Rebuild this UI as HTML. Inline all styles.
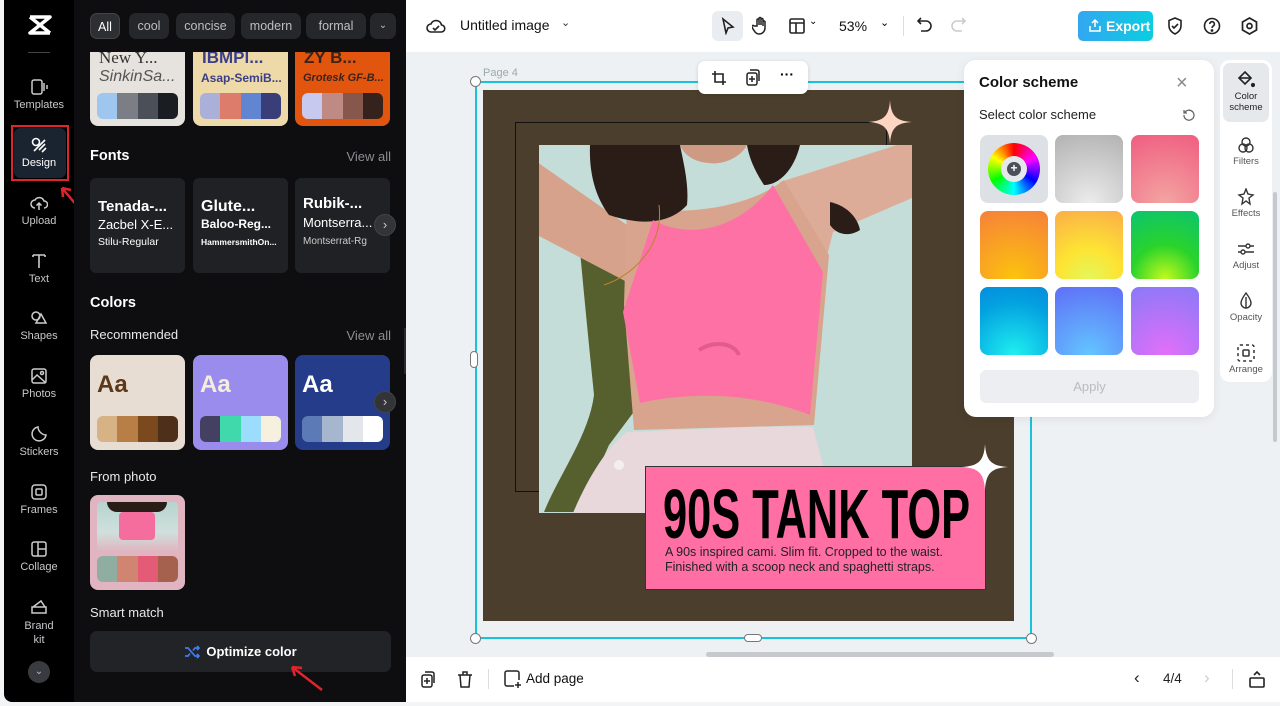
<!DOCTYPE html>
<html><head><meta charset="utf-8"><style>
*{box-sizing:border-box;margin:0;padding:0}
body{width:1280px;height:706px;overflow:hidden;background:#f3f4f6;font-family:"Liberation Sans",sans-serif;position:relative}
.abs{position:absolute}
#side{left:4px;top:0;width:70px;height:702px;background:#000;border-radius:0 0 0 8px}
.nav{position:absolute;left:0;width:70px;text-align:center;color:#c8c8cc;font-size:11px}
.nav svg{display:block;margin:0 auto 3px}
#panel{left:74px;top:0;width:332px;height:702px;background:#0e0e10;color:#fff}
.chip{position:absolute;top:13px;height:26px;border-radius:7px;background:#26272b;color:#bdbdc2;font-size:12.5px;line-height:26px;text-align:center}
.card{position:absolute;border-radius:8px;overflow:hidden}
.pal{position:absolute;left:7px;right:7px;height:26px;border-radius:6px;overflow:hidden;display:flex}
.pal i{flex:1}
.h{position:absolute;font-size:14.5px;font-weight:bold;color:#fff}
.sub{position:absolute;font-size:13px;color:#e8e8ea}
.va{position:absolute;right:15px;font-size:13px;color:#8d8d92}
.fc{position:absolute;top:178px;width:95px;height:95px;background:#202124;border-radius:6px;color:#fff;padding:20px 8px 0}
.arrowbtn{position:absolute;width:22px;height:22px;border-radius:50%;background:#333438;border:1px solid #444;color:#ccc;font-size:13px;line-height:20px;text-align:center}
#top{left:406px;top:0;width:874px;height:52px;background:#fff}
#canvas{left:406px;top:52px;width:874px;height:605px;background:#eef1f4}
#bot{left:406px;top:657px;width:874px;height:45px;background:#fff}
.sw{position:absolute;width:68px;height:68px;border-radius:8px}
.tool{position:absolute;left:0;width:46px;text-align:center;font-size:9.5px;color:#555}
.tool svg{display:block;margin:0 auto 2px}
</style></head><body>

<div id="side" class="abs">
  <svg class="abs" style="left:23px;top:14px" width="26" height="22" viewBox="0 0 26 22"><path d="M3 3h20L3 19h20" stroke="#fff" stroke-width="3.5" fill="none" stroke-linejoin="round"/><path d="M3 3l20 16" stroke="#fff" stroke-width="3.5"/></svg>
  <div class="abs" style="left:24px;top:52px;width:22px;height:1px;background:#444"></div>
  <div class="nav" style="top:78px"><svg width="18" height="18" viewBox="0 0 18 18" fill="none" stroke="#ccc" stroke-width="1.5"><rect x="2" y="2" width="10" height="14" rx="2"/><path d="M14 5v8M17 7v4"/></svg>Templates</div>
  <div class="abs" style="left:7px;top:125px;width:58px;height:56px;border:2px solid #e0242b"></div>
  <div class="abs" style="left:10px;top:128px;width:52px;height:50px;background:#1a2430;border-radius:6px"></div>
  <div class="nav" style="top:136px;color:#fff"><svg width="18" height="18" viewBox="0 0 18 18" fill="none" stroke="#fff" stroke-width="1.6"><circle cx="6" cy="6" r="3.5"/><path d="M9 14l6-6M4 15l11-11M12 16l4-4"/></svg>Design</div>
  <svg class="abs" style="left:52px;top:180px" width="32" height="38"><path d="M28 34L6 8M6 8l1 9M6 8l9 2" stroke="#e0242b" stroke-width="2.5" fill="none"/></svg>
  <div class="nav" style="top:194px"><svg width="18" height="18" viewBox="0 0 18 18" fill="none" stroke="#ccc" stroke-width="1.5"><path d="M5 14a4 4 0 010-8 5 5 0 019 1 3.5 3.5 0 010 7M9 16V9M6.5 11.5L9 9l2.5 2.5"/></svg>Upload</div>
  <div class="nav" style="top:252px"><svg width="18" height="18" viewBox="0 0 18 18" fill="none" stroke="#ccc" stroke-width="1.6"><path d="M3 3h12M9 3v13M3 3v2M15 3v2"/></svg>Text</div>
  <div class="nav" style="top:309px"><svg width="18" height="18" viewBox="0 0 18 18" fill="none" stroke="#ccc" stroke-width="1.5"><circle cx="6" cy="7" r="4"/><path d="M11 5l5 9H6z"/></svg>Shapes</div>
  <div class="nav" style="top:367px"><svg width="18" height="18" viewBox="0 0 18 18" fill="none" stroke="#ccc" stroke-width="1.5"><rect x="2" y="2" width="14" height="14" rx="2"/><path d="M2 13l5-5 9 8"/><circle cx="12" cy="6" r="1.5"/></svg>Photos</div>
  <div class="nav" style="top:425px"><svg width="18" height="18" viewBox="0 0 18 18" fill="none" stroke="#ccc" stroke-width="1.5"><path d="M16 10a7 7 0 11-8-8c0 4 4 8 8 8z"/></svg>Stickers</div>
  <div class="nav" style="top:483px"><svg width="18" height="18" viewBox="0 0 18 18" fill="none" stroke="#ccc" stroke-width="1.5"><rect x="2" y="2" width="14" height="14" rx="3"/><rect x="6" y="6" width="6" height="6" rx="1"/></svg>Frames</div>
  <div class="nav" style="top:540px"><svg width="18" height="18" viewBox="0 0 18 18" fill="none" stroke="#ccc" stroke-width="1.5"><rect x="2" y="2" width="14" height="14" rx="2"/><path d="M8 2v14M8 9h8"/></svg>Collage</div>
  <div class="nav" style="top:598px;line-height:14px"><svg width="18" height="18" viewBox="0 0 18 18" fill="none" stroke="#ccc" stroke-width="1.5"><path d="M2 9h14v6H2zM3 9l8-6 4 6"/></svg>Brand<br>kit</div>
  <div class="abs" style="left:24px;top:661px;width:22px;height:22px;border-radius:50%;background:#3a3b40;color:#bbb;font-size:10px;text-align:center;line-height:22px">⌄</div>
</div>

<div id="panel" class="abs">
  <div class="chip" style="left:16px;width:30px;background:#2e2f33;border:1px solid #444;color:#fff">All</div>
  <div class="chip" style="left:55px;width:40px">cool</div>
  <div class="chip" style="left:102px;width:59px">concise</div>
  <div class="chip" style="left:167px;width:60px">modern</div>
  <div class="chip" style="left:232px;width:60px">formal</div>
  <div class="chip" style="left:296px;width:26px;font-size:10px">⌄</div>
  <div class="card" style="left:16px;top:52px;width:95px;height:74px;background:#e6e2dd;border-radius:0 0 8px 8px">
    <div style="position:absolute;left:9px;top:-4px;font-family:'Liberation Serif',serif;font-size:17px;color:#333">New Y...</div>
    <div style="position:absolute;left:9px;top:16px;font-size:16px;font-style:italic;color:#555">SinkinSa...</div>
    <div class="pal" style="top:41px"><i style="background:#9fc6ee"></i><i style="background:#7b7f85"></i><i style="background:#4b4f57"></i><i style="background:#1a1d22"></i></div></div>
  <div class="card" style="left:119px;top:52px;width:95px;height:74px;background:#eed9a8;border-radius:0 0 8px 8px">
    <div style="position:absolute;left:9px;top:-4px;font-size:17px;font-weight:bold;color:#3a3f88">IBMPl...</div>
    <div style="position:absolute;left:8px;top:19px;font-size:12px;font-weight:bold;color:#3a3f88">Asap-SemiB...</div>
    <div class="pal" style="top:41px"><i style="background:#abb0d8"></i><i style="background:#de7c6c"></i><i style="background:#6185d0"></i><i style="background:#3a3e78"></i></div></div>
  <div class="card" style="left:221px;top:52px;width:95px;height:74px;background:#e2550f;border-radius:0 0 8px 8px">
    <div style="position:absolute;left:9px;top:-4px;font-size:17px;font-weight:bold;color:#3b2418">ZY B...</div>
    <div style="position:absolute;left:8px;top:20px;font-size:11px;font-weight:bold;font-style:italic;color:#3b2418">Grotesk GF-B...</div>
    <div class="pal" style="top:41px"><i style="background:#c8c9ef"></i><i style="background:#c08a84"></i><i style="background:#87574c"></i><i style="background:#35221c"></i></div></div>

  <div class="h" style="left:16px;top:148px">Fonts</div><div class="va" style="top:149px">View all</div>
  <div class="fc" style="left:16px"><div style="font-size:15px;font-weight:bold">Tenada-...</div><div style="font-size:13px;margin-top:2px">Zacbel X-E...</div><div style="font-size:10.5px;margin-top:4px">Stilu-Regular</div></div>
  <div class="fc" style="left:119px"><div style="font-size:16px;font-weight:bold">Glute...</div><div style="font-size:12px;font-weight:bold;margin-top:1px">Baloo-Reg...</div><div style="font-size:8.5px;font-weight:bold;margin-top:6px">HammersmithOn...</div></div>
  <div class="fc" style="left:221px;padding-top:17px"><div style="font-size:15px;font-weight:bold">Rubik-...</div><div style="font-size:13px;margin-top:3px">Montserra...</div><div style="font-size:10px;margin-top:6px;color:#ccc">Montserrat-Rg</div></div>
  <div class="arrowbtn" style="left:300px;top:214px">›</div>

  <div class="h" style="left:16px;top:295px">Colors</div>
  <div class="sub" style="left:16px;top:327px">Recommended</div><div class="va" style="top:328px">View all</div>
  <div class="card" style="left:16px;top:355px;width:95px;height:95px;background:#e8ddd2"><div style="position:absolute;left:7px;top:16px;font-size:24px;font-weight:bold;color:#5a3819">Aa</div><div class="pal" style="top:61px"><i style="background:#d6b284"></i><i style="background:#b77f45"></i><i style="background:#7a4a1e"></i><i style="background:#4e2f19"></i></div></div>
  <div class="card" style="left:119px;top:355px;width:95px;height:95px;background:#9a8ced"><div style="position:absolute;left:7px;top:16px;font-size:24px;font-weight:bold;color:#f5eedb">Aa</div><div class="pal" style="top:61px"><i style="background:#444062"></i><i style="background:#3fd9ac"></i><i style="background:#9cdcfd"></i><i style="background:#f5f1de"></i></div></div>
  <div class="card" style="left:221px;top:355px;width:95px;height:95px;background:#243c8a"><div style="position:absolute;left:7px;top:16px;font-size:24px;font-weight:bold;color:#fff">Aa</div><div class="pal" style="top:61px"><i style="background:#5c7bb6"></i><i style="background:#a6b6cf"></i><i style="background:#e3e7ec"></i><i style="background:#fff"></i></div></div>
  <div class="arrowbtn" style="left:300px;top:391px">›</div>

  <div class="sub" style="left:16px;top:469px">From photo</div>
  <div class="card" style="left:16px;top:495px;width:95px;height:95px;background:#e0b4c0">
    <div style="position:absolute;left:7px;top:7px;width:81px;height:50px;border-radius:4px;overflow:hidden;background:linear-gradient(180deg,#b7d3cf,#cfe0dc 60%,#e0b4c0)">
      <div style="position:absolute;left:10px;top:0;width:60px;height:10px;background:#2a1c16;border-radius:0 0 20px 20px"></div>
      <div style="position:absolute;left:22px;top:10px;width:36px;height:28px;background:#f56d9c;border-radius:4px"></div>
    </div>
    <div class="pal" style="top:61px"><i style="background:#8fada0"></i><i style="background:#d08472"></i><i style="background:#e35b74"></i><i style="background:#a6604e"></i></div></div>

  <div class="sub" style="left:16px;top:605px">Smart match</div>
  <div class="abs" style="left:16px;top:631px;width:301px;height:41px;background:#222327;border-radius:7px;text-align:center;line-height:41px;font-size:13px;font-weight:bold;color:#fff">
    <svg style="vertical-align:-3px;margin-right:6px" width="16" height="14" viewBox="0 0 16 14" fill="none" stroke="#3e7cf7" stroke-width="1.7"><path d="M1 3h3l7 8h4M1 11h3l2-2.5M9 5.5L11 3h4M13 1l2 2-2 2M13 9l2 2-2 2"/></svg>Optimize color</div>
  <svg class="abs" style="left:210px;top:660px" width="44" height="34"><path d="M38 30L8 7M8 7l3 9M8 7l10 1" stroke="#e0242b" stroke-width="2.5" fill="none"/></svg>
  <div class="abs" style="left:330px;top:328px;width:6px;height:46px;background:#2a2b2f;border-radius:0 6px 6px 0"></div>
</div>

<div id="top" class="abs">
  <svg class="abs" style="left:20px;top:17px" width="20" height="18" viewBox="0 0 20 18" fill="none" stroke="#222" stroke-width="1.6"><path d="M5 15a4 4 0 010-8 5.5 5.5 0 0110.5 1A3.5 3.5 0 0115 15z"/><path d="M7 11l2 2 4-4"/></svg>
  <div class="abs" style="left:54px;top:17px;font-size:14px;color:#111">Untitled image</div>
  <div class="abs" style="left:155px;top:16px;font-size:11px;color:#333">⌄</div>
  <div class="abs" style="left:306px;top:11px;width:31px;height:30px;background:#e9ecf0;border-radius:6px"></div>
  <svg class="abs" style="left:314px;top:17px" width="16" height="18" viewBox="0 0 16 18" fill="none" stroke="#222" stroke-width="1.6"><path d="M3 2l10 8-5 1-2 5z"/></svg>
  <svg class="abs" style="left:346px;top:16px" width="18" height="19" viewBox="0 0 18 19" fill="none" stroke="#222" stroke-width="1.5"><path d="M5 10V4a1 1 0 012 0v5V2.5a1 1 0 012 0V9V3.5a1 1 0 012 0V10V6a1 1 0 012 0v6a6 6 0 01-6 6c-3 0-4-2-6-5l-1-2a1 1 0 012-1z"/></svg>
  <svg class="abs" style="left:383px;top:18px" width="16" height="16" viewBox="0 0 16 16" fill="none" stroke="#222" stroke-width="1.6"><rect x="1" y="1" width="14" height="14" rx="1.5"/><path d="M1 5h14M7 5v10"/></svg>
  <div class="abs" style="left:403px;top:16px;font-size:10px">⌄</div>
  <div class="abs" style="left:433px;top:18px;font-size:14px;color:#111">53%</div>
  <div class="abs" style="left:474px;top:16px;font-size:11px">⌄</div>
  <div class="abs" style="left:497px;top:16px;width:1px;height:20px;background:#ddd"></div>
  <svg class="abs" style="left:511px;top:17px" width="16" height="17" viewBox="0 0 16 17" fill="none" stroke="#222" stroke-width="1.6"><path d="M4 1L1 4l3 3M1 4h8a5 5 0 010 10H4"/></svg>
  <svg class="abs" style="left:544px;top:17px" width="16" height="17" viewBox="0 0 16 17" fill="none" stroke="#ccc" stroke-width="1.6"><path d="M12 1l3 3-3 3M15 4H7a5 5 0 000 10h5"/></svg>
  <div class="abs" style="left:672px;top:11px;width:75px;height:30px;border-radius:5px;background:linear-gradient(90deg,#33a7f0,#0bcde0);color:#fff;font-size:14px;font-weight:bold;line-height:30px;padding-left:28px">Export</div>
  <svg class="abs" style="left:683px;top:19px" width="12" height="13" viewBox="0 0 12 13" fill="none" stroke="#fff" stroke-width="1.5"><path d="M6 8V1M3 4l3-3 3 3M1 7v5h10V7"/></svg>
  <svg class="abs" style="left:761px;top:17px" width="16" height="18" viewBox="0 0 16 18" fill="none" stroke="#222" stroke-width="1.6"><path d="M8 1l6 2.5V9c0 4-3 6.5-6 8-3-1.5-6-4-6-8V3.5z"/><path d="M5 9l2 2 4-4"/></svg>
  <svg class="abs" style="left:797px;top:17px" width="18" height="18" viewBox="0 0 18 18" fill="none" stroke="#222" stroke-width="1.6"><circle cx="9" cy="9" r="7.5"/><path d="M6.8 7a2.3 2.3 0 114 1.5C10 9.3 9 9.6 9 11"/><circle cx="9" cy="13.5" r=".6" fill="#222"/></svg>
  <svg class="abs" style="left:835px;top:17px" width="17" height="18" viewBox="0 0 17 18" fill="none" stroke="#222" stroke-width="1.7"><path d="M8.5 1l7 4v8l-7 4-7-4V5z"/><circle cx="8.5" cy="9" r="2.5"/></svg>
</div>

<div id="canvas" class="abs">
  <div class="abs" style="left:300px;top:600px;width:348px;height:5px;background:#c5c9cd;border-radius:3px"></div>
  <div class="abs" style="left:867px;top:140px;width:4px;height:250px;background:#c5c9cd;border-radius:2px"></div>
</div>

<div class="abs" style="left:483px;top:67px;font-size:11px;color:#9aa">Page 4</div>
<div class="abs" style="left:483px;top:90px;width:531px;height:531px;background:#4b3e2d"></div>
<div class="abs" style="left:515px;top:122px;width:372px;height:370px;border:1.5px solid #111"></div>
<svg class="abs" style="left:539px;top:145px" width="373" height="368" viewBox="0 0 373 368">
  <rect width="373" height="368" fill="#c4ddd8"/>
  <path d="M40 95 C60 110 80 130 95 135 L100 260 L70 300 L40 367 L5 367 C20 330 50 290 55 250 C50 200 45 150 40 95Z" fill="#56602f"/>
  <path d="M-2 17 L88 80 L88 137 L-2 90Z" fill="#d7a28c"/>
  <path d="M241 37 L358 0 L373 0 L373 53 L294 87 L284 127 L250 80Z" fill="#dcac99"/>
  <path d="M88 60 C120 70 200 70 245 35 L290 110 L275 280 L95 285 L85 160Z" fill="#d9a48d"/>
  <path d="M141 0 L208 0 C200 15 180 20 170 18 C155 17 145 10 141 0Z" fill="#cf9a83"/>
  <path d="M51 0 L141 0 C145 20 150 40 148 60 C130 80 100 80 70 70 C55 50 50 25 51 0Z" fill="#2a1c16"/>
  <path d="M208 0 L261 0 C255 25 240 40 225 40 C215 25 210 12 208 0Z" fill="#2a1c16"/>
  <path d="M291 57 C305 60 318 70 321 85 C310 92 298 90 291 80Z" fill="#2a1c16"/>
  <path d="M114 75 C150 95 200 85 234 40 L284 127 L271 270 C220 250 160 245 101 258 L84 167Z" fill="#fd71a5"/>
  <path d="M160 205 C175 195 195 198 200 210" stroke="#e25b8e" stroke-width="4" fill="none"/>
  <path d="M120 60 C125 100 95 130 65 140" stroke="#b8862b" stroke-width="1" fill="none"/>
  <path d="M88 287 C150 285 220 280 274 282 L284 320 L290 368 L34 368 C50 330 70 300 88 287Z" fill="#e8d7db"/>
  <circle cx="80" cy="320" r="5" fill="#f5eef0"/>
</svg>
<div class="abs" style="left:645px;top:466px;width:341px;height:124px;background:#ff6fa3;border:1.5px solid #333;border-radius:0 18px 0 0"></div>
<div class="abs" style="left:663px;top:474px;font-size:70px;font-weight:bold;color:#000;transform:scaleX(.62);transform-origin:left;line-height:80px;white-space:nowrap">90S TANK TOP</div>
<div class="abs" style="left:665px;top:545px;font-size:12.5px;color:#222;line-height:15px;white-space:nowrap">A 90s inspired cami. Slim fit. Cropped to the waist.<br>Finished with a scoop neck and spaghetti straps.</div>
<svg class="abs" style="left:868px;top:100px" width="44" height="44" viewBox="0 0 44 44"><path d="M22 0C23 16 28 21 44 22C28 23 23 28 22 44C21 28 16 23 0 22C16 21 21 16 22 0Z" fill="#fcd6c3"/></svg>
<svg class="abs" style="left:962px;top:444px" width="46" height="46" viewBox="0 0 44 44"><path d="M22 0C23 16 28 21 44 22C28 23 23 28 22 44C21 28 16 23 0 22C16 21 21 16 22 0Z" fill="#fff"/></svg>
<div class="abs" style="left:475px;top:81px;width:557px;height:558px;border:2px solid #17c3d8"></div>
<div class="abs" style="left:470px;top:76px;width:11px;height:11px;border-radius:50%;background:#fff;border:1px solid #777"></div>
<div class="abs" style="left:470px;top:633px;width:11px;height:11px;border-radius:50%;background:#fff;border:1px solid #777"></div>
<div class="abs" style="left:1026px;top:633px;width:11px;height:11px;border-radius:50%;background:#fff;border:1px solid #777"></div>
<div class="abs" style="left:470px;top:351px;width:8px;height:17px;border-radius:4px;background:#fff;border:1px solid #777"></div>
<div class="abs" style="left:744px;top:634px;width:18px;height:8px;border-radius:4px;background:#fff;border:1px solid #777"></div>
<div class="abs" style="left:698px;top:61px;width:110px;height:33px;background:#fff;border-radius:7px;box-shadow:0 1px 4px rgba(0,0,0,.15)">
  <svg class="abs" style="left:13px;top:9px" width="16" height="16" viewBox="0 0 16 16" fill="none" stroke="#222" stroke-width="1.6"><path d="M4 1v11h11M1 4h11v11"/></svg>
  <svg class="abs" style="left:47px;top:8px" width="16" height="17" viewBox="0 0 16 17" fill="none" stroke="#222" stroke-width="1.5"><rect x="2" y="4" width="10" height="12" rx="2"/><path d="M5 1h7a2 2 0 012 2v9M7 7v6M4 10h6"/></svg>
  <div class="abs" style="left:82px;top:5px;font-size:14px;font-weight:bold">···</div>
</div>

<div class="abs" style="left:964px;top:60px;width:250px;height:357px;background:#fff;border-radius:12px;box-shadow:0 2px 10px rgba(0,0,0,.08)">
  <div class="abs" style="left:15px;top:14px;font-size:15px;font-weight:bold;color:#111">Color scheme</div>
  <div class="abs" style="left:212px;top:12px;font-size:20px;color:#888;font-weight:300">×</div>
  <div class="abs" style="left:15px;top:47px;font-size:13px;color:#222">Select color scheme</div>
  <svg class="abs" style="left:218px;top:47px" width="14" height="14" viewBox="0 0 14 14" fill="none" stroke="#666" stroke-width="1.3"><path d="M2 3v3h3M2.5 6A5 5 0 112 8"/></svg>
  <div class="sw" style="left:16px;top:75px;background:#dde1e6"><div style="position:absolute;left:8px;top:8px;width:52px;height:52px;border-radius:50%;background:conic-gradient(#f00,#f0f,#00f,#0ff,#0f0,#ff0,#f00)"></div><div style="position:absolute;left:21px;top:21px;width:26px;height:26px;border-radius:50%;background:#e5e7ea"></div><div style="position:absolute;left:27px;top:27px;width:14px;height:14px;border-radius:50%;background:#4a4f5a;color:#fff;font-size:12px;line-height:13px;text-align:center;font-weight:bold">+</div></div>
  <div class="sw" style="left:91px;top:75px;background:radial-gradient(circle at 50% 100%,#ececec,#b2b2b2)"></div>
  <div class="sw" style="left:167px;top:75px;background:radial-gradient(circle at 50% 100%,#f3a5a2,#f05d80)"></div>
  <div class="sw" style="left:16px;top:151px;background:radial-gradient(circle at 50% 100%,#fcc40c,#f6803a)"></div>
  <div class="sw" style="left:91px;top:151px;background:radial-gradient(circle at 50% 100%,#e3f75c,#fde433 40%,#fbad49)"></div>
  <div class="sw" style="left:167px;top:151px;background:radial-gradient(circle at 50% 100%,#c4fa1c,#2ad32b 45%,#0bc46f)"></div>
  <div class="sw" style="left:16px;top:227px;background:radial-gradient(circle at 50% 100%,#1ff0f0,#03a1e0 70%,#058ddd)"></div>
  <div class="sw" style="left:91px;top:227px;background:radial-gradient(circle at 50% 100%,#63c6ff,#5f6ef7)"></div>
  <div class="sw" style="left:167px;top:227px;background:radial-gradient(circle at 50% 100%,#e46ff9,#8979f8)"></div>
  <div class="abs" style="left:16px;top:310px;width:219px;height:33px;border-radius:6px;background:#eceef1;color:#bbb;text-align:center;line-height:33px;font-size:13px">Apply</div>
</div>

<div class="abs" style="left:1220px;top:60px;width:52px;height:322px;background:#fff;border-radius:10px">
  <div class="abs" style="left:3px;top:3px;width:46px;height:59px;background:#e6e9ec;border-radius:7px"></div>
  <div class="tool" style="left:3px;top:11px;color:#222"><svg width="18" height="18" viewBox="0 0 18 18" fill="none" stroke="#222" stroke-width="1.6"><path d="M8 1l6 6-6 6-6-6z"/><path d="M2 7h12" /><circle cx="16" cy="14" r="1.3" fill="#222"/></svg>Color<br>scheme</div>
  <div class="tool" style="left:3px;top:76px"><svg width="18" height="18" viewBox="0 0 18 18" fill="none" stroke="#333" stroke-width="1.4"><circle cx="9" cy="6" r="4"/><circle cx="6" cy="12" r="4"/><circle cx="12" cy="12" r="4"/></svg>Filters</div>
  <div class="tool" style="left:3px;top:128px"><svg width="18" height="18" viewBox="0 0 18 18" fill="none" stroke="#333" stroke-width="1.4"><path d="M9 1l2 5 5 1-4 3 1 6-4-3-4 3 1-6-4-3 5-1z"/></svg>Effects</div>
  <div class="tool" style="left:3px;top:180px"><svg width="18" height="18" viewBox="0 0 18 18" fill="none" stroke="#333" stroke-width="1.4"><path d="M1 6h16M1 12h16"/><circle cx="11" cy="6" r="2" fill="#fff"/><circle cx="6" cy="12" r="2" fill="#fff"/></svg>Adjust</div>
  <div class="tool" style="left:3px;top:232px"><svg width="18" height="18" viewBox="0 0 18 18" fill="none" stroke="#333" stroke-width="1.4"><path d="M9 1c3 4 5 7 5 10a5 5 0 01-10 0c0-3 2-6 5-10z"/><path d="M9 5v11" /></svg>Opacity</div>
  <div class="tool" style="left:3px;top:284px"><svg width="18" height="18" viewBox="0 0 18 18" fill="none" stroke="#333" stroke-width="1.5"><rect x="1" y="1" width="16" height="16" rx="2" stroke-dasharray="3 3"/><rect x="6" y="6" width="6" height="6" rx="1"/></svg>Arrange</div>
</div>

<div id="bot" class="abs">
  <svg class="abs" style="left:14px;top:14px" width="16" height="17" viewBox="0 0 16 17" fill="none" stroke="#222" stroke-width="1.5"><rect x="2" y="4" width="10" height="12" rx="2"/><path d="M5 1h7a2 2 0 012 2v9M7 7v6M4 10h6"/></svg>
  <svg class="abs" style="left:51px;top:14px" width="16" height="17" viewBox="0 0 16 17" fill="none" stroke="#222" stroke-width="1.5"><path d="M1 4h14M6 4V1h4v3M3 4l1 12h8l1-12"/></svg>
  <div class="abs" style="left:82px;top:12px;width:1px;height:20px;background:#ddd"></div>
  <svg class="abs" style="left:98px;top:13px" width="18" height="19" viewBox="0 0 18 19" fill="none" stroke="#222" stroke-width="1.5"><path d="M10 16H3a2 2 0 01-2-2V3a2 2 0 012-2h10a2 2 0 012 2v7M14 12v6M11 15h6"/></svg>
  <div class="abs" style="left:120px;top:14px;font-size:13.5px;color:#111">Add page</div>
  <div class="abs" style="left:728px;top:11px;font-size:17px;color:#222">‹</div>
  <div class="abs" style="left:757px;top:14px;font-size:13.5px;color:#222">4/4</div>
  <div class="abs" style="left:798px;top:11px;font-size:17px;color:#ccc">›</div>
  <div class="abs" style="left:826px;top:12px;width:1px;height:20px;background:#ddd"></div>
  <svg class="abs" style="left:843px;top:13px" width="16" height="18" viewBox="0 0 16 18" fill="none" stroke="#222" stroke-width="1.6"><rect x="1" y="8" width="14" height="9" rx="1"/><path d="M5 5l3-3 3 3"/></svg>
</div>
</body></html>
